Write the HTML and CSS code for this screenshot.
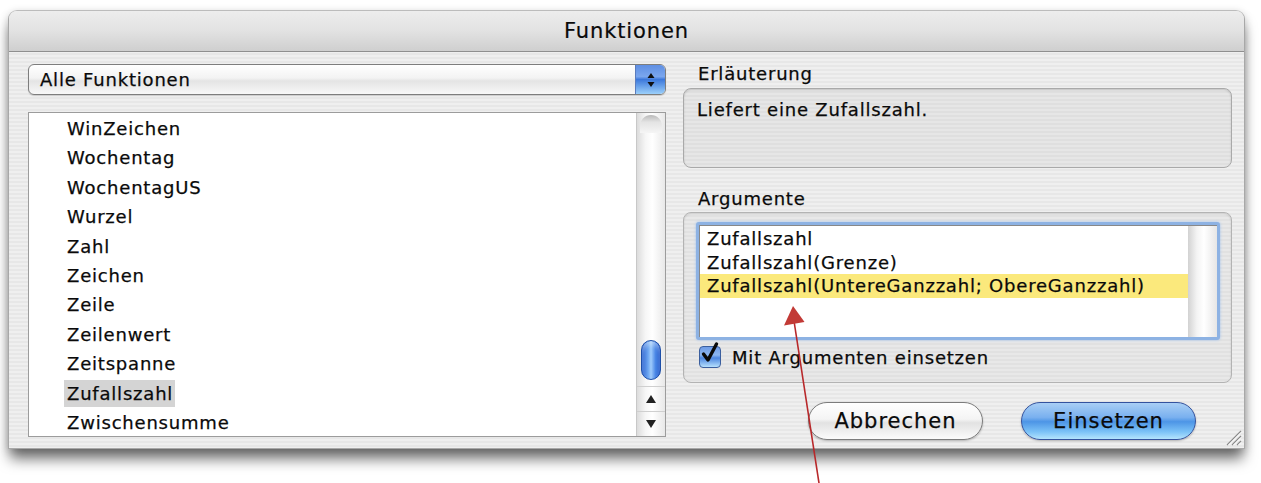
FILE: index.html
```html
<!DOCTYPE html>
<html lang="de">
<head>
<meta charset="utf-8">
<title>Funktionen</title>
<link rel="stylesheet" href="styles.css">
</head>
<body>
<div class="window">
  <div class="titlebar">Funktionen</div>
  <div class="content">
    <div class="left">
      <div class="popup">
        <span class="popup-label">Alle Funktionen</span>
        <span class="stepper">
          <svg width="10" height="18" viewBox="0 0 10 18"><path d="M5 2 L8.5 7 L1.5 7 Z" fill="#111"/><path d="M5 16 L8.5 11 L1.5 11 Z" fill="#111"/></svg>
        </span>
      </div>
      <div class="listbox">
        <ul class="items">
          <li>WinZeichen</li>
          <li>Wochentag</li>
          <li>WochentagUS</li>
          <li>Wurzel</li>
          <li>Zahl</li>
          <li>Zeichen</li>
          <li>Zeile</li>
          <li>Zeilenwert</li>
          <li>Zeitspanne</li>
          <li><span class="sel">Zufallszahl</span></li>
          <li>Zwischensumme</li>
        </ul>
        <div class="scrollbar">
          <div class="track">
            <div class="cap"></div>
            <div class="thumb"></div>
          </div>
          <div class="arrow up"><svg width="12" height="10" viewBox="0 0 12 10"><path d="M6 1 L11 9 L1 9 Z" fill="#222"/></svg></div>
          <div class="arrow down"><svg width="12" height="10" viewBox="0 0 12 10"><path d="M6 9 L11 1 L1 1 Z" fill="#222"/></svg></div>
        </div>
      </div>
    </div>
    <div class="right">
      <div class="label first">Erläuterung</div>
      <div class="descbox">Liefert eine Zufallszahl.</div>
      <div class="label second">Argumente</div>
      <div class="groupbox">
        <div class="arglist">
          <div class="argitems">
            <div class="arg">Zufallszahl</div>
            <div class="arg">Zufallszahl(Grenze)</div>
            <div class="arg hl">Zufallszahl(UntereGanzzahl; ObereGanzzahl)</div>
          </div>
          <div class="argscroll"></div>
        </div>
        <div class="check">
          <span class="checkbox"><svg width="22" height="24" viewBox="0 0 22 24"><path d="M4.5 13 L9 19 L17.5 3" fill="none" stroke="#0a0a0a" stroke-width="3.4" stroke-linecap="round" stroke-linejoin="round"/></svg></span>
          <span class="check-label">Mit Argumenten einsetzen</span>
        </div>
      </div>
      <div class="buttons">
        <button class="btn">Abbrechen</button>
        <button class="btn default">Einsetzen</button>
      </div>
    </div>
  </div>
  <svg class="grip" width="18" height="18" viewBox="0 0 18 18">
    <path d="M17 3 L3 17 M17 8 L8 17 M17 13 L13 17" stroke="#8a8a8a" stroke-width="1.2"/>
    <path d="M17 4.5 L4.5 17 M17 9.5 L9.5 17 M17 14.5 L14.5 17" stroke="#fff" stroke-width="1"/>
  </svg>
</div>
<svg class="annot" width="50" height="180" viewBox="0 0 50 180">
  <line x1="14" y1="18" x2="39" y2="180" stroke="#b8282a" stroke-width="1.6"/>
  <path d="M13 3 L24.5 19 L4 22.5 Z" fill="#c23a36"/>
</svg>
</body>
</html>
```

FILE: styles.css
```css
html, body {
  margin: 0;
  padding: 0;
  background: #ffffff;
}
body {
  width: 1261px;
  height: 483px;
  overflow: hidden;
  position: relative;
  font-family: "DejaVu Sans", "Liberation Sans", sans-serif;
  color: #0a0a0a;
}
.window {
  position: relative;
  margin: 10px 0 0 8px;
  width: 1237px;
  height: 439px;
  box-sizing: border-box;
  border: 1px solid #a8a8a8;
  border-top-color: #bcbcbc;
  border-radius: 9px 9px 0 0;
  background: repeating-linear-gradient(to bottom, #efefef 0, #efefef 2px, #e7e7e7 2px, #e7e7e7 4px);
  box-shadow: 0 12px 14px -2px rgba(0,0,0,0.55), 0 2px 8px rgba(0,0,0,0.18);
}
.titlebar {
  height: 40px;
  border-bottom: 1px solid #8f8f8f;
  border-radius: 8px 8px 0 0;
  background: linear-gradient(to bottom, #ededed 0%, #e2e2e2 50%, #cfcfcf 100%);
  text-align: center;
  line-height: 41px;
  font-size: 21px;
  letter-spacing: 0.9px;
  color: #0a0a0a;
  -webkit-text-stroke: 0.2px #0a0a0a;
}
.content {
  display: flex;
  gap: 17px;
  padding: 12px 12px 0 19px;
  font-size: 18px;
  letter-spacing: 0.8px;
  -webkit-text-stroke: 0.25px #0a0a0a;
}
.left {
  width: 638px;
  display: flex;
  flex-direction: column;
  gap: 17px;
}
.popup {
  height: 31px;
  box-sizing: border-box;
  border: 1px solid #7d7d7d;
  border-radius: 6px;
  background: linear-gradient(to bottom, #ffffff 0%, #f3f3f3 45%, #e4e4e4 55%, #f8f8f8 100%);
  display: flex;
  align-items: center;
  justify-content: space-between;
  box-shadow: 0 1px 1px rgba(0,0,0,0.15);
  overflow: hidden;
}
.popup-label {
  padding-left: 11px;
}
.stepper {
  width: 29px;
  height: 100%;
  display: flex;
  align-items: center;
  justify-content: center;
  border-left: 1px solid #5a7cbd;
  background: linear-gradient(to bottom, #5f8fe3 0%, #7aa6ee 40%, #3c78db 50%, #9bd0fb 100%);
}
.listbox {
  height: 325px;
  box-sizing: border-box;
  border: 1px solid #9c9c9c;
  background: #ffffff;
  display: flex;
}
.items {
  flex: 1;
  list-style: none;
  margin: 0;
  padding: 1px 0 0 0;
}
.items li {
  height: 29.4px;
  line-height: 29.4px;
  padding-left: 38px;
}
.items .sel {
  background: #d4d4d4;
  padding: 3px 2px 3px 3px;
  margin-left: -3px;
}
.scrollbar {
  width: 28px;
  display: flex;
  flex-direction: column;
  border-left: 1px solid #c8c8c8;
  background: linear-gradient(to right, #dcdcdc 0%, #f6f6f6 30%, #ffffff 55%, #e8e8e8 100%);
}
.track {
  flex: 1;
  display: flex;
  flex-direction: column;
  justify-content: space-between;
  padding: 2px 3px 6px 3px;
}
.cap {
  height: 18px;
  border-radius: 12px 12px 0 0;
  background: linear-gradient(to bottom, #b9b9b9 0%, #e4e4e4 40%, #f5f5f5 100%);
}
.thumb {
  height: 38px;
  margin: 0 1px;
  border-radius: 11px;
  border: 1px solid #1d4fa8;
  background: linear-gradient(to right, #2a62d0 0%, #6fa8f2 35%, #9fcbfb 50%, #4a87e6 75%, #1f57c9 100%);
  box-shadow: inset 0 4px 4px rgba(255,255,255,0.35);
}
.arrow {
  height: 24px;
  display: flex;
  align-items: center;
  justify-content: center;
  border-top: 1px solid #cfcfcf;
}
.right {
  width: 549px;
  display: flex;
  flex-direction: column;
}
.label {
  padding-left: 15px;
  line-height: 20px;
}
.label.first {
  height: 24px;
}
.label.second {
  margin-top: 21px;
  height: 23px;
}
.descbox {
  height: 80px;
  box-sizing: border-box;
  border: 1px solid #a9a9a9;
  border-radius: 8px;
  background: repeating-linear-gradient(to bottom, #e6e6e6 0, #e6e6e6 2px, #dfdfdf 2px, #dfdfdf 4px);
  box-shadow: inset 0 1px 2px rgba(0,0,0,0.15);
  padding: 11px 13px;
  line-height: 20px;
}
.groupbox {
  height: 171px;
  box-sizing: border-box;
  border: 1px solid #b3b3b3;
  border-radius: 8px;
  background: repeating-linear-gradient(to bottom, #e8e8e8 0, #e8e8e8 2px, #e1e1e1 2px, #e1e1e1 4px);
  box-shadow: inset 0 1px 2px rgba(0,0,0,0.12);
  padding: 9px 11px 0 12px;
}
.arglist {
  height: 118px;
  box-sizing: border-box;
  border: 3px solid #8db2e3;
  border-radius: 3px;
  box-shadow: 0 0 3px #9fc1ee;
  background: #ffffff;
  display: flex;
}
.argitems {
  flex: 1;
  padding-top: 1px;
  border-top: 1px solid #888;
  border-left: 1px solid #888;
}
.arg {
  height: 23.5px;
  line-height: 23.5px;
  padding-left: 7px;
}
.arg.hl {
  background: #fbe97c;
}
.argscroll {
  width: 29px;
  border-top: 1px solid #888;
  background: linear-gradient(to right, #d2d2d2 0%, #f3f3f3 30%, #ffffff 55%, #e6e6e6 100%);
}
.check {
  display: flex;
  align-items: center;
  gap: 11px;
  margin-top: 6px;
  padding-left: 3px;
}
.checkbox {
  width: 22px;
  height: 22px;
  box-sizing: border-box;
  border: 1px solid #3b5f9e;
  border-radius: 4px;
  background: linear-gradient(to bottom, #6f9ce6 0%, #8cb6f0 40%, #4c86e0 55%, #b6e0fd 100%);
  position: relative;
}
.checkbox svg {
  position: absolute;
  left: -1px;
  top: -6px;
}
.buttons {
  display: flex;
  justify-content: flex-end;
  gap: 38px;
  padding-right: 36px;
  margin-top: 19px;
}
.btn {
  width: 175px;
  height: 38px;
  border-radius: 19px;
  border: 1px solid #7c7c7c;
  background: linear-gradient(to bottom, #ffffff 0%, #f4f4f4 45%, #e2e2e2 55%, #fbfbfb 100%);
  font-family: "DejaVu Sans", "Liberation Sans", sans-serif;
  font-size: 21px;
  letter-spacing: 1px;
  -webkit-text-stroke: 0.25px #0a0a0a;
  color: #0a0a0a;
  box-shadow: 0 1px 2px rgba(0,0,0,0.25);
  padding: 0;
}
.btn.default {
  border-color: #34539e;
  background: linear-gradient(to bottom, #a9cff5 0%, #79b0ef 40%, #4d95e6 52%, #7cc2f7 80%, #b4e4fd 100%);
}
.grip {
  position: absolute;
  right: 2px;
  bottom: 2px;
}
.annot {
  position: absolute;
  left: 780px;
  top: 303px;
}
```
